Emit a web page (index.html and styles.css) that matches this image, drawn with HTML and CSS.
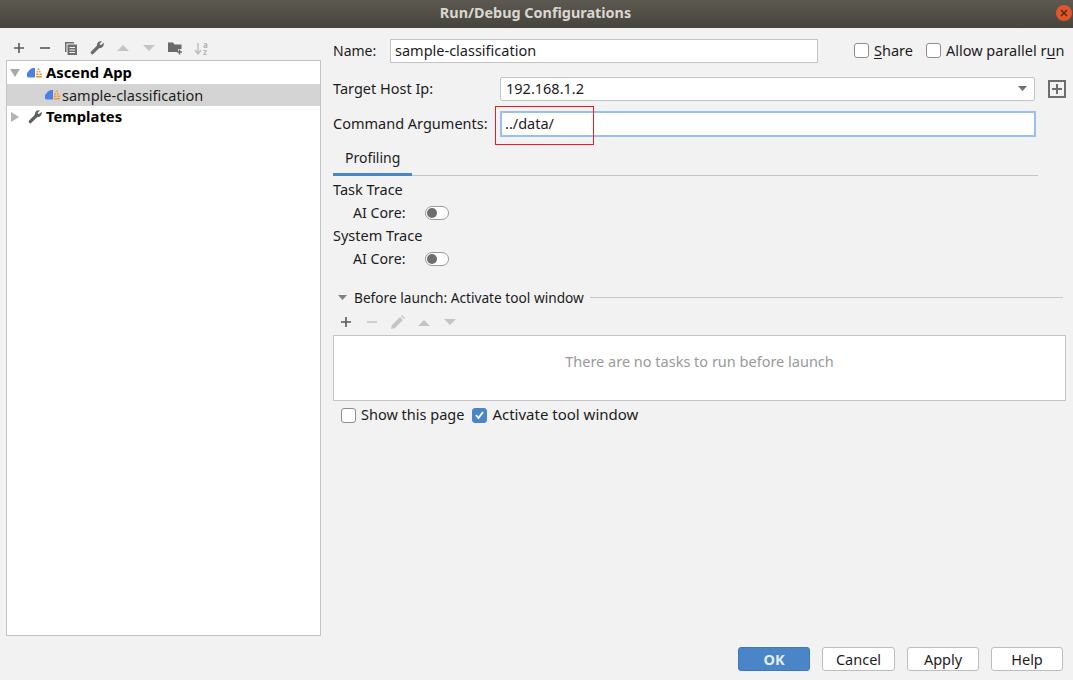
FILE: index.html
```html
<!DOCTYPE html>
<html lang="en">
<head>
  <meta charset="UTF-8" />
  <title>Run/Debug Configurations</title>
  <link rel="stylesheet" href="styles.css">
</head>
<body>
  <div class="dialog">

    <!-- Title bar -->
    <div class="titlebar">
      <span class="title">Run/Debug Configurations</span>
      <span class="close">
        <svg width="8" height="8" viewBox="0 0 8 8"><path d="M1 1l6 6M7 1l-6 6" stroke="#4a2416" stroke-width="1.3" fill="none"/></svg>
      </span>
    </div>

    <div class="content">

      <!-- Left: configuration tree -->
      <div class="left">
        <div class="toolbar">
          <svg class="tool" width="14" height="14" viewBox="0 0 14 14"><path d="M7 2v10M2 7h10" stroke="#595959" stroke-width="1.6"/></svg>
          <svg class="tool" width="14" height="14" viewBox="0 0 14 14"><path d="M2 7h10" stroke="#595959" stroke-width="1.6"/></svg>
          <svg class="tool" width="14" height="14" viewBox="0 0 14 14"><path d="M1 1h9v1.500H2.500V11H1z" fill="#6e6e6e"/><path d="M3.500 3.500H13V14H3.500z" fill="#6e6e6e"/><path d="M5.500 6.500h5.500M5.500 9h5.500M5.500 11.500h5.500" stroke="#f2f2f2" stroke-width="1.100"/></svg>
          <svg class="tool" width="14" height="14" viewBox="0 0 14 14"><path d="M2.300 11.700L8 6" stroke="#6a6a6a" stroke-width="3.200" stroke-linecap="round"/><path d="M13.600 1.800L10.900 4.200 9.500 3 11.800.4C9 -.3 6.400 2 7 5l2 2c3 .8 5.500-2 4.600-5.200z" fill="#6a6a6a"/></svg>
          <svg class="tool" width="14" height="14" viewBox="0 0 14 14"><path d="M1 10l6-6 6 6z" fill="#c4c4c4"/></svg>
          <svg class="tool" width="14" height="14" viewBox="0 0 14 14"><path d="M1 4l6 6 6-6z" fill="#c4c4c4"/></svg>
          <svg class="tool" width="15" height="14" viewBox="0 0 15 14"><path d="M0 1.500h5l1.500 2H13.500v4.500H10V11H0z" fill="#6a6a6a"/><path d="M11.500 8.500v5M9 11h5" stroke="#6a6a6a" stroke-width="1.500"/></svg>
          <span class="sort">
            <svg width="8" height="14" viewBox="0 0 8 14"><path d="M4 2v10M1 9l3 4 3-4" stroke="#bdbdbd" stroke-width="1.400" fill="none"/></svg>
            <span class="sort-letters">a<br>z</span>
          </span>
        </div>

        <div class="tree">
          <div class="tree-row">
            <svg class="arrow" width="10" height="10" viewBox="0 0 10 10"><path d="M0 1h10L5 9z" fill="#a8a8a8"/></svg>
            <svg class="app-icon" width="16" height="10" viewBox="0 0 16 10"><path d="M0 8.500V5L3 1.500C4 .5 5 0 6 0h2v9.500H1z" fill="#4d80e4"/><path d="M10.500 .5h2v1.500h-2zM9.500 3h1.500v1.500H9.500zM12 3h1.500v1.500H12zM9 5.500h2.500V7H9zM12.500 5.500H15V7h-2.500zM9 8h6v1.500H9z" fill="#f5962a"/></svg>
            <span class="tree-bold">Ascend App</span>
          </div>
          <div class="tree-row selected">
            <svg class="app-icon child" width="16" height="10" viewBox="0 0 16 10"><path d="M0 8.500V5L3 1.500C4 .5 5 0 6 0h2v9.500H1z" fill="#4d80e4"/><path d="M10.500 .5h2v1.500h-2zM9.500 3h1.500v1.500H9.500zM12 3h1.500v1.500H12zM9 5.500h2.500V7H9zM12.500 5.500H15V7h-2.500zM9 8h6v1.500H9z" fill="#f5962a"/></svg>
            <span>sample-classification</span>
          </div>
          <div class="tree-row">
            <svg class="arrow" width="10" height="10" viewBox="0 0 10 10"><path d="M1 0l8 5-8 5z" fill="#b4b4b4"/></svg>
            <svg class="wrench" width="14" height="14" viewBox="0 0 14 14"><path d="M2.300 11.700L8 6" stroke="#5f5f5f" stroke-width="3.200" stroke-linecap="round"/><path d="M13.600 1.800L10.900 4.200 9.500 3 11.800.4C9 -.3 6.400 2 7 5l2 2c3 .8 5.500-2 4.600-5.200z" fill="#5f5f5f"/></svg>
            <span class="tree-bold">Templates</span>
          </div>
        </div>
      </div>

      <!-- Right: configuration form -->
      <div class="right">
        <div class="row-name">
          <label class="label-name">Name:</label>
          <div class="field name-field">sample-classification</div>
          <span class="check share"><span class="box"></span><span><u>S</u>hare</span></span>
          <span class="check parallel"><span class="box"></span><span>Allow parallel r<u>u</u>n</span></span>
        </div>

        <div class="row-host">
          <label class="label-long">Target Host Ip:</label>
          <div class="field host-field">
            <span>192.168.1.2</span>
            <svg width="9" height="5" viewBox="0 0 9 5"><path d="M0 0h9L4.500 5z" fill="#6e6e6e"/></svg>
          </div>
          <svg class="add-host" width="18" height="18" viewBox="0 0 18 18"><rect x="1" y="1" width="16" height="16" fill="none" stroke="#6e6e6e" stroke-width="2"/><path d="M9 4v10M4 9h10" stroke="#6e6e6e" stroke-width="2"/></svg>
        </div>

        <div class="row-args">
          <label class="label-long">Command Arguments:</label>
          <div class="field args-field">../data/</div>
          <div class="red-mark"></div>
        </div>

        <div class="tabs">
          <div class="tab">Profiling</div>
        </div>

        <div class="trace-title">Task Trace</div>
        <div class="trace-row">
          <span class="trace-label">AI Core:</span>
          <span class="toggle"><span class="knob"></span></span>
        </div>
        <div class="trace-title">System Trace</div>
        <div class="trace-row">
          <span class="trace-label">AI Core:</span>
          <span class="toggle"><span class="knob"></span></span>
        </div>

        <div class="before-head">
          <svg width="9" height="5" viewBox="0 0 9 5"><path d="M0 0h9L4.500 5z" fill="#808080"/></svg>
          <span>Before launch: Activate tool window</span>
          <div class="before-line"></div>
        </div>

        <div class="before-tools">
          <svg width="12" height="12" viewBox="0 0 12 12"><path d="M6 1v10M1 6h10" stroke="#595959" stroke-width="1.600"/></svg>
          <svg width="12" height="12" viewBox="0 0 12 12"><path d="M1 6h10" stroke="#c4c4c4" stroke-width="1.600"/></svg>
          <svg width="14" height="14" viewBox="0 0 14 14"><path d="M0 14l1-4 8-8 3 3-8 8zM10 1l1-1 3 3-1 1z" fill="#c4c4c4"/></svg>
          <svg width="12" height="7" viewBox="0 0 12 7"><path d="M0 7l6-6 6 6z" fill="#c4c4c4"/></svg>
          <svg width="12" height="7" viewBox="0 0 12 7"><path d="M0 0l6 6 6-6z" fill="#c4c4c4"/></svg>
        </div>

        <div class="tasks-box">There are no tasks to run before launch</div>

        <div class="row-options">
          <span class="check"><span class="box"></span><span class="option-text">Show this page</span></span>
          <span class="check">
            <span class="box checked">
              <svg width="11" height="10" viewBox="0 0 11 10"><path d="M2 5l2.500 3L9 2" stroke="#fff" stroke-width="1.800" fill="none"/></svg>
            </span>
            <span class="option-text activate">Activate tool window</span>
          </span>
        </div>
      </div>
    </div>

    <!-- Buttons -->
    <div class="footer">
      <button class="btn primary">OK</button>
      <button class="btn cancel">Cancel</button>
      <button class="btn">Apply</button>
      <button class="btn">Help</button>
    </div>
  </div>
</body>
</html>
```

FILE: styles.css
```css
html, body {
  margin: 0;
  height: 100%;
}
body {
  font-family: "Noto Sans", "Open Sans", sans-serif;
  font-size: 14.5px;
  color: #1c1c1c;
  background: #f2f2f2;
  overflow: hidden;
}
u {
  text-underline-offset: 2px;
}
.dialog {
  display: flex;
  flex-direction: column;
  height: 680px;
}

/* title bar */
.titlebar {
  position: relative;
  display: flex;
  justify-content: center;
  align-items: center;
  flex: none;
  height: 28px;
  background: linear-gradient(#5c5950, #46443d);
}
.title {
  padding: 0 2px 3px 0;
  font-weight: 700;
  font-size: 14.4px;
  color: #dad7d0;
}
.close {
  position: absolute;
  right: 1px;
  top: 5px;
  display: flex;
  justify-content: center;
  align-items: center;
  width: 16px;
  height: 16px;
  border-radius: 50%;
  background: #e2562a;
}

.content {
  display: flex;
  flex: 1;
  min-height: 0;
}

/* left panel */
.left {
  display: flex;
  flex-direction: column;
  flex: none;
  width: 315px;
  margin: 0 12px 0 6px;
}
.toolbar {
  box-sizing: border-box;
  display: flex;
  align-items: center;
  flex: none;
  height: 32px;
  padding: 8px 0 0 6px;
  gap: 12px;
}
.tool {
  flex: none;
}
.sort {
  display: flex;
  align-items: center;
  gap: 1px;
  margin-left: -1px;
}
.sort-letters {
  font-size: 8px;
  line-height: 7px;
  font-weight: 700;
  color: #b4b4b4;
}
.tree {
  flex: none;
  height: 576px;
  box-sizing: border-box;
  margin-bottom: 11px;
  background: #fff;
  border: 1px solid #c4c4c4;
  padding-top: 1px;
}
.tree-row {
  display: flex;
  align-items: center;
  height: 22px;
  padding-left: 3px;
}
.tree-row.selected {
  background: #d4d4d4;
}
.arrow {
  flex: none;
  margin-right: 7px;
}
.app-icon {
  flex: none;
  margin-right: 3px;
}
.app-icon.child {
  margin-left: 35px;
  margin-right: 1px;
}
.wrench {
  flex: none;
  margin: 0 4px 0 1px;
}
.tree-bold {
  padding-bottom: 2px;
  font-weight: 700;
  color: #000;
  font-size: 14.8px;
}

/* right panel */
.right {
  flex: 1;
  min-width: 0;
  padding: 11px 7px 0 0;
}
.row-name {
  display: flex;
  align-items: center;
  height: 24px;
}
.label-name {
  width: 57px;
  flex: none;
  padding-bottom: 2px;
  font-size: 14px;
}
.label-long {
  width: 167px;
  flex: none;
  padding-bottom: 2px;
}
.field {
  box-sizing: border-box;
  display: flex;
  align-items: center;
  background: #fff;
  border: 1px solid #c4c4c4;
  padding: 0 4px 2px;
  white-space: nowrap;
}
.name-field {
  width: 428px;
  height: 24px;
}
.check {
  display: flex;
  align-items: center;
  gap: 5px;
  white-space: nowrap;
}
.row-name .check {
  padding-bottom: 2px;
}
.share {
  margin-left: 36px;
}
.parallel {
  margin-left: 13px;
}
.box {
  box-sizing: border-box;
  display: flex;
  justify-content: center;
  align-items: center;
  flex: none;
  width: 15px;
  height: 15px;
  border: 1px solid #8e8e8e;
  border-radius: 3px;
  background: #fff;
}
.box.checked {
  background: #4a86c7;
  border-color: #4a86c7;
}
.row-host {
  display: flex;
  align-items: center;
  height: 24px;
  margin-top: 14px;
}
.host-field {
  justify-content: space-between;
  width: 535px;
  height: 24px;
  padding-left: 5px;
  padding-right: 7px;
  border-radius: 2px;
}
.add-host {
  margin-left: 13px;
  flex: none;
}
.row-args {
  position: relative;
  display: flex;
  align-items: center;
  height: 26px;
  margin-top: 10px;
}
.args-field {
  width: 536px;
  height: 26px;
  padding-left: 3px;
  border: 2px solid #97c0ea;
}
.red-mark {
  position: absolute;
  left: 162px;
  top: -5px;
  width: 99px;
  height: 39px;
  box-sizing: border-box;
  border: 1px solid #ed1c24;
}
.tabs {
  box-sizing: border-box;
  width: 705px;
  height: 30px;
  margin-top: 9px;
  border-bottom: 1px solid #c4c4c4;
}
.tab {
  box-sizing: border-box;
  width: 79px;
  height: 30px;
  padding: 2px 0 0 12px;
  font-size: 14px;
  border-bottom: 3px solid #4a86c7;
}
.trace-title {
  display: flex;
  align-items: center;
  height: 23px;
  padding-bottom: 2px;
  box-sizing: border-box;
}
.tabs + .trace-title {
  margin-top: 2px;
}
.trace-row {
  display: flex;
  align-items: center;
  height: 23px;
  padding-left: 20px;
}
.trace-label {
  width: 72px;
  flex: none;
  font-size: 14.2px;
}
.toggle {
  box-sizing: border-box;
  display: flex;
  align-items: center;
  width: 24px;
  height: 14px;
  padding-left: 1px;
  border: 1px solid #9a9a9a;
  border-radius: 7px;
  background: #fff;
}
.knob {
  width: 10px;
  height: 10px;
  border-radius: 50%;
  background: #6e6e6e;
}
.before-head {
  display: flex;
  align-items: center;
  height: 20px;
  margin-top: 17px;
  padding-left: 5px;
  font-size: 13.7px;
}
.before-head span {
  margin-left: 7px;
  white-space: nowrap;
}
.before-line {
  flex: 1;
  height: 1px;
  margin: 0 3px 0 6px;
  background: #c8c8c8;
}
.before-tools {
  display: flex;
  align-items: center;
  height: 22px;
  margin-top: 4px;
  padding-left: 6px;
  gap: 12px;
}
.before-tools svg {
  width: 14px;
  flex: none;
}
.tasks-box {
  box-sizing: border-box;
  display: flex;
  justify-content: center;
  align-items: center;
  height: 66px;
  margin-top: 2px;
  padding-bottom: 14px;
  background: #fff;
  border: 1px solid #c4c4c4;
  color: #999;
}
.row-options {
  display: flex;
  align-items: center;
  height: 20px;
  margin-top: 4px;
  padding-left: 8px;
  gap: 8px;
}
.option-text {
  padding-bottom: 2px;
}
.activate {
  font-size: 15px;
}

/* footer buttons */
.footer {
  display: flex;
  justify-content: flex-end;
  flex: none;
  gap: 12px;
  padding: 0 10px 9px 0;
}
.btn {
  box-sizing: border-box;
  width: 72px;
  height: 24px;
  padding: 0;
  font: inherit;
  color: #1c1c1c;
  background: #fff;
  border: 1px solid #bdbdbd;
  border-radius: 3px;
}
.btn.cancel {
  width: 73px;
}
.btn.primary {
  background: #4a86c7;
  border-color: #3f79b8;
  color: #e4edf7;
  font-weight: 700;
}
```
